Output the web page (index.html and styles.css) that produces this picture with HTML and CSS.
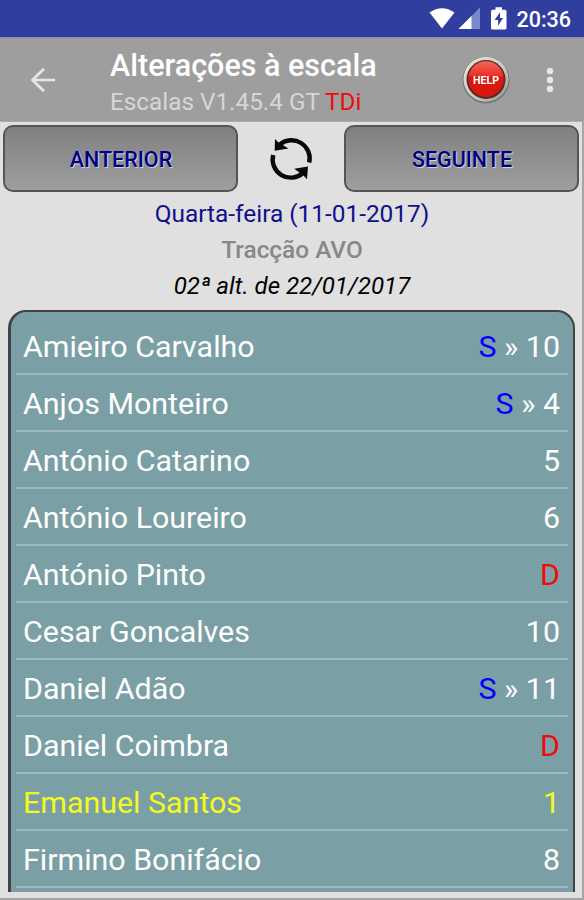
FILE: index.html
```html
<!DOCTYPE html>
<html lang="pt">
<head>
<meta charset="utf-8">
<title>Alterações à escala</title>
<link rel="stylesheet" href="styles.css">
</head>
<body>
<div class="screen">
  <div class="statusbar">
    <svg class="status-icons" width="82" height="24" viewBox="0 0 82 24">
      <path d="M0.5 5.500 Q13 -3 25.500 5.500 L13 21.500 Z" fill="#fff"/>
      <path d="M29.500 22 L51 0.500 V22 Z" fill="#7c88cc"/>
      <path d="M29.500 22 L42.500 9 V22 Z" fill="#fff"/>
      <path d="M66.500 0.300 h6.500 v2.500 h3 q1.500 0 1.500 1.500 v16.700 q0 1.500 -1.500 1.500 h-12.500 q-1.500 0 -1.500 -1.500 v-16.700 q0 -1.500 1.500 -1.500 h3 z" fill="#fff"/>
      <path d="M71 5.200 L65.600 13 H69.100 V18.700 L74 10.900 H71 Z" fill="#303f9f"/>
    </svg>
    <span class="clock">20:36</span>
  </div>
  <header class="appbar">
    <svg class="back" width="26" height="26" viewBox="0 0 26 26" fill="none" stroke="#e6e6e6" stroke-width="2.700">
      <path d="M25 13 H2.500 M14 1.700 L2.500 13 L14 24.300"/>
    </svg>
    <div class="titles">
      <h1>Alterações à escala</h1>
      <p>Escalas V1.45.4 GT <span class="red">TDi</span></p>
    </div>
    <svg class="help" width="50" height="50" viewBox="0 0 50 50">
      <defs>
        <linearGradient id="ring" x1="0" y1="0" x2="1" y2="1">
          <stop offset="0" stop-color="#e6e6de"/><stop offset=".6" stop-color="#c9c9c2"/><stop offset="1" stop-color="#8f8f89"/>
        </linearGradient>
        <linearGradient id="face" x1="0" y1="0" x2="0" y2="1">
          <stop offset="0" stop-color="#f4685a"/><stop offset=".4" stop-color="#ea3026"/><stop offset=".45" stop-color="#d81810"/><stop offset="1" stop-color="#d9190f"/>
        </linearGradient>
      </defs>
      <circle cx="25" cy="25" r="23.500" fill="#77776f"/>
      <circle cx="25" cy="24.200" r="22.500" fill="url(#ring)"/>
      <circle cx="25" cy="24.500" r="19.500" fill="#5a2a25"/>
      <circle cx="25" cy="24" r="17.800" fill="url(#face)"/>
      <text x="25" y="28.500" text-anchor="middle" textLength="26" lengthAdjust="spacingAndGlyphs" class="help-text">HELP</text>
    </svg>
    <svg class="more" width="8" height="26" viewBox="0 0 8 26" fill="#e8e8e8">
      <circle cx="4" cy="4" r="3.200"/><circle cx="4" cy="13" r="3.200"/><circle cx="4" cy="22" r="3.200"/>
    </svg>
  </header>
  <nav class="pager">
    <button class="btn">ANTERIOR</button>
    <svg class="refresh" width="44" height="44" viewBox="0 0 44 44">
      <g fill="none" stroke="#080808" stroke-width="4.400">
        <path d="M11 7.300 A18.200 18.200 0 0 1 40.200 25.500"/>
        <path d="M34 36 A18.200 18.200 0 0 1 4.200 18"/>
      </g>
      <path d="M6 2 L9.500 5.500 L19.500 11.500 L5.700 13.700 Z M38 42.300 L34.500 38.500 L25.200 31.700 L39 29.500 Z" fill="#080808"/>
    </svg>
    <button class="btn">SEGUINTE</button>
  </nav>
  <section class="info">
    <p class="date">Quarta-feira (11-01-2017)</p>
    <p class="depot">Tracção AVO</p>
    <p class="revision">02ª alt. de 22/01/2017</p>
  </section>
  <ul class="list">
    <li><span>Amieiro Carvalho</span><span><b class="swap">S</b> » 10</span></li>
    <li><span>Anjos Monteiro</span><span><b class="swap">S</b> » 4</span></li>
    <li><span>António Catarino</span><span>5</span></li>
    <li><span>António Loureiro</span><span>6</span></li>
    <li><span>António Pinto</span><span class="red">D</span></li>
    <li><span>Cesar Goncalves</span><span>10</span></li>
    <li><span>Daniel Adão</span><span><b class="swap">S</b> » 11</span></li>
    <li><span>Daniel Coimbra</span><span class="red">D</span></li>
    <li class="current"><span>Emanuel Santos</span><span>1</span></li>
    <li><span>Firmino Bonifácio</span><span>8</span></li>
  </ul>
</div>
</body>
</html>
```
FILE: styles.css
```css
* { box-sizing: border-box; margin: 0; padding: 0; }
body { font-family: Roboto, "Liberation Sans", sans-serif; background: #e0e0e0; }
.screen {
  width: 584px;
  height: 900px;
  display: flex;
  flex-direction: column;
  background: #e0e0e0;
  box-shadow: inset -2px -2px 0 #a6a6a6;
  overflow: hidden;
}
.statusbar {
  height: 37px;
  flex: none;
  display: flex;
  justify-content: flex-end;
  align-items: center;
  padding-right: 13px;
  background: #303f9f;
  color: #fff;
}
.status-icons { margin: 1px 5px 0 0; }
.clock { font-size: 21.500px; font-weight: 500; line-height: 26px; margin-top: 3px; }
.appbar {
  height: 85px;
  flex: none;
  display: flex;
  align-items: center;
  padding: 0 30px;
  background: #9e9e9e;
  border-top: 1px solid #8d8da0;
  border-bottom: 1px solid #acacac;
}
.back { flex: none; }
.titles { flex: 1; margin-left: 54px; padding-top: 9px; white-space: nowrap; }
.titles h1 { font-size: 30.500px; font-weight: 500; line-height: 36px; color: #fff; }
.titles p { font-size: 24.300px; line-height: 36px; color: #d6d6d6; }
.red, .titles .red { color: #f00a0a; }
.help { flex: none; margin-right: 35px; }
.more { flex: none; }
.help-text { font: bold 11px Roboto, sans-serif; fill: #fff; }
.pager {
  display: flex;
  justify-content: space-between;
  align-items: center;
  padding: 3px 5px 0 3px;
  height: 70px;
  flex: none;
}
.btn {
  width: 235px;
  height: 67px;
  border: 2px solid #555;
  border-radius: 10px;
  background: linear-gradient(#808080, #9e9e9e);
  padding: 2px 0 0 1px;
  font: 500 21.500px Roboto, sans-serif;
  color: #000080;
  text-shadow: 1px 1px 1px #ddd;
}
.info { padding: 4px 0 0; flex: none; text-align: center; font-size: 24.400px; line-height: 36px; }
.date { color: #10108c; }
.depot { color: #888; font-weight: 500; }
.revision { color: #000; font-size: 24.100px; font-style: italic; }
.list {
  list-style: none;
  height: 582px;
  flex: none;
  margin: 6px 9px 0 8px;
  padding: 6px 5px 0;
  border: 2px solid #424246;
  border-width: 2px 2px 0 3px;
  border-radius: 18px 18px 0 0;
  background: #7a9fa5;
  color: #fff;
  font-size: 30.400px;
}
.list li {
  display: flex;
  justify-content: space-between;
  align-items: center;
  height: 57px;
  padding: 1px 8px 0 7px;
  border-bottom: 2px solid #a0b9c0;
}
.list .swap { color: #00f; font-weight: 400; }
.list .current { color: #f5fa1e; }
```
